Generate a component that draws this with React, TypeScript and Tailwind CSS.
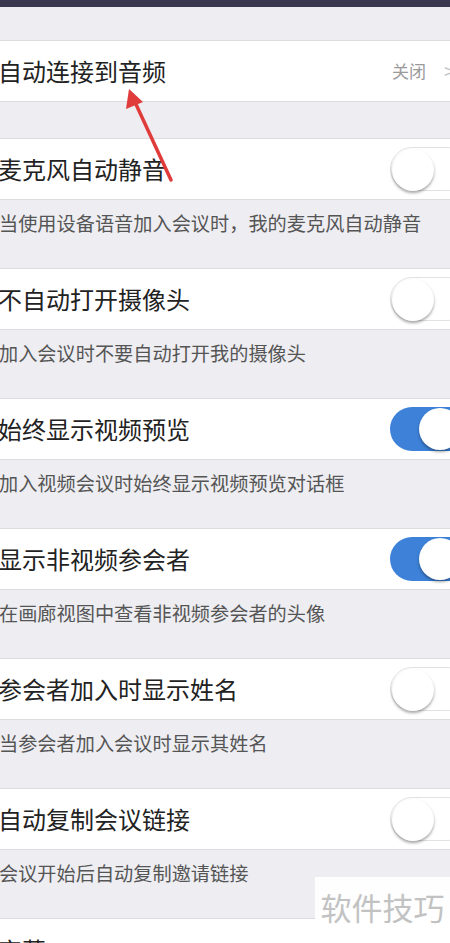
import { ReactNode } from 'react';

const font = '"Noto Sans CJK SC", "Noto Sans", sans-serif';

type Setting = { title: string; desc: string; on: boolean };

const settings: Setting[] = [
  { title: '麦克风自动静音', desc: '当使用设备语音加入会议时，我的麦克风自动静音', on: false },
  { title: '不自动打开摄像头', desc: '加入会议时不要自动打开我的摄像头', on: false },
  { title: '始终显示视频预览', desc: '加入视频会议时始终显示视频预览对话框', on: true },
  { title: '显示非视频参会者', desc: '在画廊视图中查看非视频参会者的头像', on: true },
  { title: '参会者加入时显示姓名', desc: '当参会者加入会议时显示其姓名', on: false },
  { title: '自动复制会议链接', desc: '会议开始后自动复制邀请链接', on: false },
];

function Toggle({ on }: { on: boolean }) {
  return (
    <div
      className={`relative h-[44px] w-[80px] shrink-0 rounded-full ${
        on ? 'bg-[#3d82d8]' : 'bg-white border border-[#e2e2e6]'
      }`}
    >
      <div
        className={`absolute top-[1px] h-[42px] w-[42px] rounded-full bg-white shadow-[0_2px_3px_rgba(0,0,0,0.35)] ${
          on ? 'left-[29px]' : 'left-[1px]'
        }`}
      />
    </div>
  );
}

function Row({ children }: { children: ReactNode }) {
  return (
    <div className="flex h-[62px] items-center justify-between border-y border-[#dcdce0] bg-white">
      {children}
    </div>
  );
}

export default function App() {
  return (
    <div className="relative h-[943px] w-[450px] overflow-hidden bg-[#ededf2]" style={{ fontFamily: font }}>
      <div className="h-[7px] bg-[#3a3850]" />
      <div className="h-[33px]" />

      <Row>
        <span className="ml-[-2px] text-[24px] text-[#222]">自动连接到音频</span>
        <div className="flex items-center">
          <span className="text-[17px] text-[#9a9a9a]">关闭</span>
          <span className="ml-[18px] mr-[-5px] text-[20px] text-[#c4c4c8]">&gt;</span>
        </div>
      </Row>
      <div className="h-[36px]" />

      {settings.map((s) => (
        <div key={s.title}>
          <Row>
            <span className="ml-[-2px] text-[24px] text-[#222]">{s.title}</span>
            <div className="mr-[-20px]">
              <Toggle on={s.on} />
            </div>
          </Row>
          <div className="h-[68px] pt-[9px]">
            <span className="ml-[-1px] text-[19.2px] text-[#555]">{s.desc}</span>
          </div>
        </div>
      ))}

      <div className="flex h-[62px] items-center border-t border-[#dcdce0] bg-white">
        <span className="ml-[-2px] text-[24px] text-[#222]">字幕</span>
      </div>

      {/* red annotation arrow */}
      <svg className="absolute left-0 top-0" width="450" height="943" viewBox="0 0 450 943">
        <line x1="171" y1="180" x2="134" y2="100" stroke="#e03c3c" strokeWidth="3.5" strokeLinecap="round" />
        <polygon points="129,89 126,109 143,102" fill="#e03c3c" />
      </svg>

      {/* watermark */}
      <div className="absolute left-[315px] top-[877px] flex h-[60px] w-[135px] items-center justify-center bg-white/95">
        <span className="text-[31px] text-[#c2c2c2]">软件技巧</span>
      </div>
    </div>
  );
}
